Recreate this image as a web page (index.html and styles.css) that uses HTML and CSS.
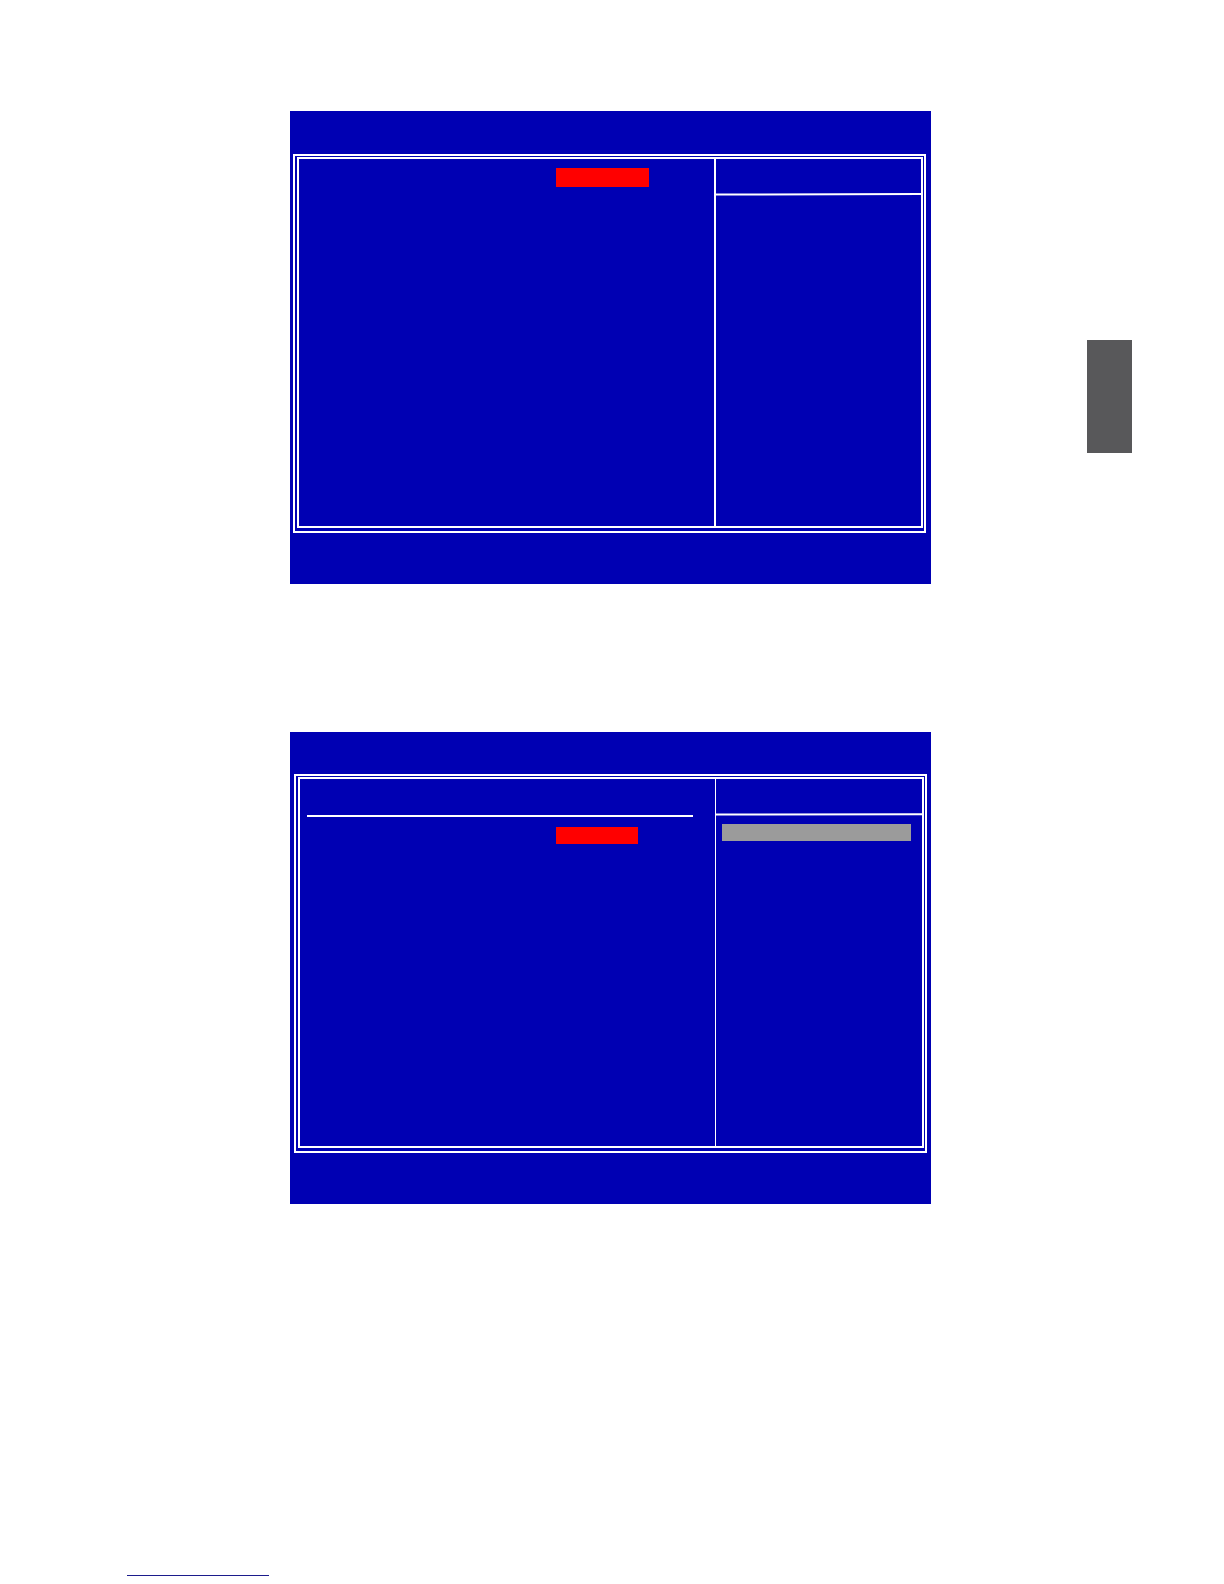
FILE: index.html
```html
<!DOCTYPE html>
<html lang="en">
<head>
<meta charset="utf-8">
<title>BIOS Setup</title>
<link rel="stylesheet" href="styles.css">
</head>
<body>
<main class="page">
  <div class="screens">
    <section class="screen">
      <div class="frame">
        <div class="frame-inner">
          <div class="settings">
            <div class="selected"></div>
          </div>
          <aside class="help">
            <div class="help-title"></div>
            <svg class="help-rule" viewBox="0 0 207 3" preserveAspectRatio="none" aria-hidden="true"><path d="M0 1.5L207 1" stroke="#fff" stroke-width="2"/></svg>
          </aside>
        </div>
      </div>
    </section>
    <section class="screen screen-sub">
      <div class="frame">
        <div class="frame-inner">
          <div class="settings">
            <div class="settings-title"></div>
            <div class="selected"></div>
          </div>
          <aside class="help">
            <div class="help-title"></div>
            <svg class="help-rule" viewBox="0 0 207 3" preserveAspectRatio="none" aria-hidden="true"><path d="M0 1.5L207 1.3" stroke="#fff" stroke-width="2"/></svg>
            <div class="help-level"></div>
          </aside>
        </div>
      </div>
    </section>
  </div>
  <div class="side">
    <div class="chapter-tab"></div>
  </div>
</main>
<footer class="footer">
  <div class="footer-rule"></div>
</footer>
</body>
</html>
```

FILE: styles.css
```css
* {
  box-sizing: border-box;
}

body {
  margin: 0;
  min-height: 100vh;
  display: flex;
  flex-direction: column;
  background: #fff;
  font-family: "Liberation Sans", Arial, sans-serif;
}

.page {
  flex: 1;
  display: grid;
  grid-template-columns: 290fr 641fr 293fr;
  padding-top: 111px;
}

.screens {
  grid-column: 2;
  display: flex;
  flex-direction: column;
  gap: 148px;
}

.screen {
  padding: 43px 5px 51px 3px;
  background: #0000b3;
}

.screen-sub {
  padding: 42px 4px 51px 4px;
}

/* Double-line window border */
.frame {
  border: 2px solid #fff;
  padding: 1px 1px 3px 2px;
}

.frame-inner {
  display: flex;
  min-height: 371px;
  border: 2px solid #fff;
}

.settings {
  flex: 1;
  padding: 9px 22px 0 8px;
}

.screen-sub .settings {
  padding: 0 22px 0 7px;
}

.settings-title {
  height: 38px;
  margin-bottom: 10px;
  border-bottom: 2px solid #fff;
}

.selected {
  width: 93px;
  height: 19px;
  margin-left: 249px;
  background: #f00;
}

.screen-sub .selected {
  width: 82px;
  height: 17px;
}

.help {
  flex: 0 0 207px;
  border-left: 2px solid #fff;
}

.screen-sub .help {
  border-left-width: 1px;
}

.help-title {
  height: 34px;
}

.help-rule {
  display: block;
  width: 100%;
  height: 3px;
}

.help-level {
  height: 17px;
  margin: 8px 11px 0 6px;
  background: #9b9b9b;
}

.side {
  grid-column: 3;
  display: flex;
  justify-content: flex-end;
  align-items: flex-start;
  padding: 229px 92px 0 0;
}

.chapter-tab {
  width: 45px;
  height: 113px;
  background: #58585a;
}

.footer {
  padding: 0 0 8px 127px;
}

.footer-rule {
  width: 142px;
  height: 1px;
  background: #1c1c8c;
}
```
